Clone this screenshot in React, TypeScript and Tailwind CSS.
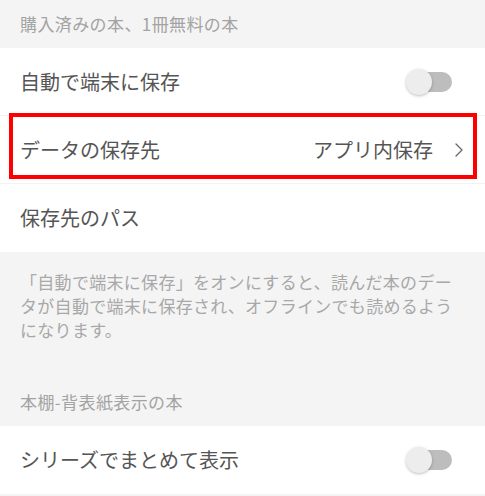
import { ChevronRight } from "lucide-react";

const Toggle = () => (
	<div className="relative w-[46px] h-[28px] flex items-center">
		<div className="absolute right-0 w-[38px] h-[20px] rounded-full bg-[#bdbdbd]" />
		<div className="absolute left-0 w-[26px] h-[26px] rounded-full bg-[#ededed] shadow-[0_1px_3px_rgba(0,0,0,0.25)]" />
	</div>
);

const SectionHeader = ({ label }: { label: string }) => (
	<div className="h-[48px] flex items-center pl-5 text-[17px] text-[#a3a3a3] tracking-[0.4px]">{label}</div>
);

const App = () => {
	return (
		<div
			className="min-h-screen bg-[#f4f4f4] text-[#555555]"
			style={{ fontFamily: '"Noto Sans CJK JP", "Noto Sans", sans-serif' }}
		>
			<SectionHeader label="購入済みの本、1冊無料の本" />

			<div className="bg-white">
				<div className="h-[68px] flex items-center justify-between pl-5 pr-[33px] border-b border-[#f2f2f2]">
					<span className="text-[20px]">自動で端末に保存</span>
					<Toggle />
				</div>

				<div className="relative h-[68px] flex items-center justify-between pl-5 pr-[14px] border-b border-[#f2f2f2]">
					<span className="text-[20px]">データの保存先</span>
					<div className="flex items-center gap-[14px]">
						<span className="text-[20px]">アプリ内保存</span>
						<ChevronRight size={24} strokeWidth={1.3} color="#666666" />
					</div>
					<div className="absolute left-[9px] right-[8px] top-[-3px] bottom-[4px] border-[4px] border-[#ff0000]" />
				</div>

				<div className="h-[68px] flex items-center pl-5">
					<span className="text-[20px]">保存先のパス</span>
				</div>
			</div>

			<div className="pt-[18px] pb-[36px] pl-5 pr-[25px] text-[17px] leading-[24px] text-[#a8a8a8] tracking-[0.3px]">
				「自動で端末に保存」をオンにすると、読んだ本のデータが自動で端末に保存され、オフラインでも読めるようになります。
			</div>

			<SectionHeader label="本棚-背表紙表示の本" />

			<div className="bg-white h-[68px] flex items-center justify-between pl-5 pr-[33px]">
				<span className="text-[20px]">シリーズでまとめて表示</span>
				<Toggle />
			</div>
		</div>
	);
};

export default App;
